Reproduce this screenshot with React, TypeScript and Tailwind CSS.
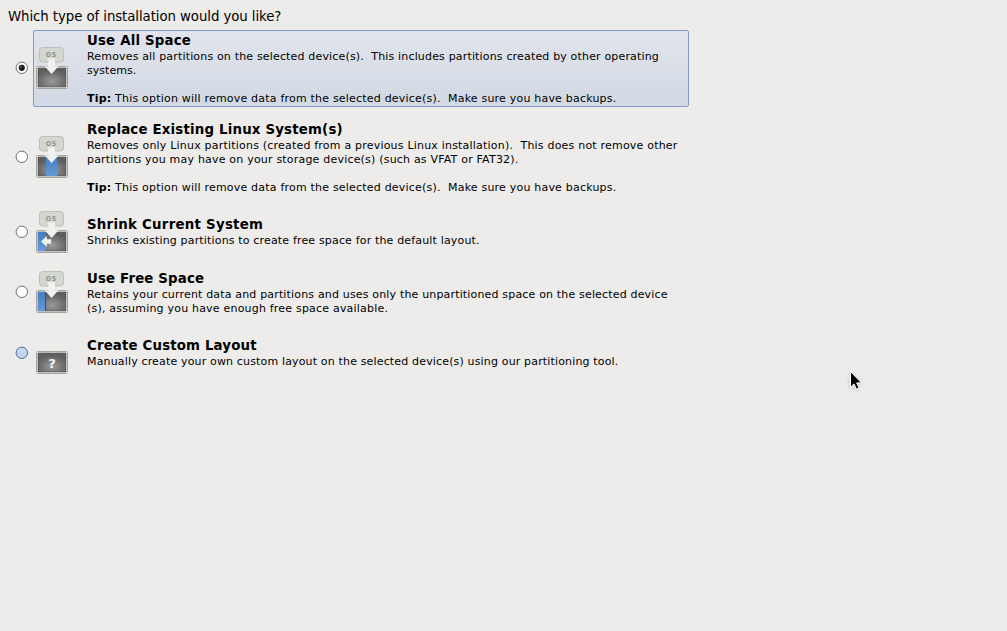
import { useState } from "react"
import clsx from "clsx"

type Kind = "all" | "replace" | "shrink" | "free" | "custom"

interface Line {
  text: string
  tracking: string
}

interface Option {
  kind: Kind
  title: Line
  lines: Line[]
  tip?: string
  box: string
  nudge?: string
}

const TIP = "This option will remove data from the selected device(s).  Make sure you have backups."

const options: Option[] = [
  {
    kind: "all",
    title: { text: "Use All Space", tracking: "tracking-[0.18px]" },
    lines: [
      {
        text: "Removes all partitions on the selected device(s).  This includes partitions created by other operating",
        tracking: "tracking-[0.167px]",
      },
      { text: "systems.", tracking: "tracking-[0.05px]" },
    ],
    tip: TIP,
    box: "h-[77px] pt-0.5",
    nudge: "mb-px",
  },
  {
    kind: "replace",
    title: { text: "Replace Existing Linux System(s)", tracking: "tracking-[0.19px]" },
    lines: [
      {
        text: "Removes only Linux partitions (created from a previous Linux installation).  This does not remove other",
        tracking: "tracking-[0.203px]",
      },
      {
        text: "partitions you may have on your storage device(s) (such as VFAT or FAT32).",
        tracking: "tracking-[0.2px]",
      },
    ],
    tip: TIP,
    box: "h-[77px] pt-0.5",
    nudge: "mb-px",
  },
  {
    kind: "shrink",
    title: { text: "Shrink Current System", tracking: "tracking-[0.26px]" },
    lines: [
      {
        text: "Shrinks existing partitions to create free space for the default layout.",
        tracking: "tracking-[0.165px]",
      },
    ],
    box: "h-12 pt-2",
  },
  {
    kind: "free",
    title: { text: "Use Free Space", tracking: "tracking-[0.15px]" },
    lines: [
      {
        text: "Retains your current data and partitions and uses only the unpartitioned space on the selected device",
        tracking: "tracking-[0.168px]",
      },
      { text: "(s), assuming you have enough free space available.", tracking: "tracking-[0.2px]" },
    ],
    box: "h-12 pt-0.5",
  },
  {
    kind: "custom",
    title: { text: "Create Custom Layout", tracking: "tracking-[0.16px]" },
    lines: [
      {
        text: "Manually create your own custom layout on the selected device(s) using our partitioning tool.",
        tracking: "tracking-[0.158px]",
      },
    ],
    box: "h-[50px] pt-[9px]",
  },
]

function DiskIcon({ kind }: { kind: Kind }) {
  return (
    <svg width="34" height="44" viewBox="0 0 34 44" className="block">
      <defs>
        <radialGradient id={`disk-${kind}`} cx="0.5" cy="0.7" r="0.6">
          <stop offset="0" stopColor="#999" />
          <stop offset="1" stopColor="#5e5e5e" />
        </radialGradient>
        <linearGradient id={`blue-${kind}`} x1="0" y1="0" x2="0" y2="1">
          <stop offset="0" stopColor="#447fc4" />
          <stop offset="1" stopColor="#6499d6" />
        </linearGradient>
      </defs>
      {kind !== "custom" && (
        <>
          <rect x="4.5" y="1.5" width="24" height="14.5" rx="3" fill="#d3d7cf" stroke="#bcc0b8" />
          <text
            x="10.8 16.7"
            y="11.3"
            fontSize="6.8"
            fontWeight="bold"
            fill="#8f938c"
            fontFamily="DejaVu Sans Condensed, DejaVu Sans, sans-serif"
          >
            OS
          </text>
        </>
      )}
      <rect x="1.5" y="20.5" width="31" height="22" rx="1" fill="#eeeeec" stroke="#a4a7a1" />
      <rect x="3" y="22" width="28" height="19" fill={`url(#disk-${kind})`} stroke="#555753" strokeWidth="0.6" />
      {kind === "replace" && <rect x="11" y="22" width="11" height="19" fill={`url(#blue-${kind})`} />}
      {kind === "shrink" && <rect x="3" y="22" width="8" height="19" fill={`url(#blue-${kind})`} />}
      {kind === "free" && (
        <>
          <rect x="3" y="22" width="7" height="19" fill={`url(#blue-${kind})`} />
          <path d="M10.5 22v19" stroke="#4a4a4a" />
        </>
      )}
      {kind === "custom" ? (
        <text
          x="17"
          y="36.8"
          textAnchor="middle"
          fontSize="13"
          fontWeight="bold"
          fill="#f5f5f5"
          fontFamily="DejaVu Sans, sans-serif"
        >
          ?
        </text>
      ) : (
        <path d="M13.2 12.3h6.8v7.9h3.6L16.6 28 9.6 20.2h3.6z" fill="#f1f1f0" />
      )}
      {kind === "shrink" && <path d="M6 31.5l5.8-5.6v3.4h4.4v4.4h-4.4v3.4z" fill="#f1f1f0" />}
    </svg>
  )
}

function Radio({ checked, hover }: { checked: boolean; hover: boolean }) {
  return (
    <svg width="14" height="14" viewBox="0 0 14 14" className="block">
      <circle cx="6.8" cy="6.8" r="5.7" fill={hover ? "#c5d7ef" : "#fff"} stroke={hover ? "#4a6c9b" : "#70706e"} />
      {checked && (
        <>
          <circle cx="6.8" cy="6.8" r="3.1" fill="#1a1a1a" />
          <circle cx="5.8" cy="5.8" r="0.9" fill="#777" />
        </>
      )}
    </svg>
  )
}

function Pointer() {
  return (
    <svg width="14" height="22" viewBox="0 0 14 22" className="absolute left-[849px] top-[370px] drop-shadow-sm">
      <path
        d="M1.5 1.5v15.8l3.5-3.4 2.5 5.3 2.6-1.2-2.4-5.1h4.8z"
        fill="#000"
        stroke="#fff"
        strokeWidth="1"
        strokeLinejoin="round"
      />
    </svg>
  )
}

export default function App() {
  const [selected, setSelected] = useState<Kind>("all")

  return (
    <main className="relative h-[631px] w-[1007px] overflow-hidden bg-[#edecea] font-['DejaVu_Sans',sans-serif] text-black">
      <h1 className="h-[30px] pl-2 pt-[9px] text-[13.33px] leading-4 tracking-[-0.083px]">
        Which type of installation would you like?
      </h1>
      <div className="flex flex-col gap-3">
        {options.map(({ kind, title, lines, tip, box, nudge }) => (
          <div key={kind} className="flex items-center pl-[15px]">
            <button className={clsx("mr-1", nudge)} onClick={() => setSelected(kind)}>
              <Radio checked={selected === kind} hover={kind === "custom"} />
            </button>
            <div
              onClick={() => setSelected(kind)}
              className={clsx(
                "flex w-[656px] rounded-[2px] border pl-px",
                box,
                selected === kind
                  ? "border-[#7f9dc3] bg-linear-to-b from-[#e1e4eb] to-[#d2d9e4]"
                  : "border-transparent",
              )}
            >
              <div
                className={clsx(
                  "shrink-0",
                  tip && "mt-[13px]",
                  kind === "shrink" && "-mt-[7px]",
                  kind === "free" && "-mt-px",
                  kind === "custom" && "-mt-[7px]",
                )}
              >
                <DiskIcon kind={kind} />
              </div>
              <div className="ml-[18px] whitespace-pre text-[11px] leading-[14px]">
                <h2 className={clsx("mb-0.5 text-[13.33px] font-bold leading-[15px]", title.tracking)}>{title.text}</h2>
                {lines.map((line) => (
                  <p key={line.text} className={line.tracking}>
                    {line.text}
                  </p>
                ))}
                {tip && (
                  <p className="mt-[14px] tracking-[0.203px]">
                    <b>Tip:</b> {tip}
                  </p>
                )}
              </div>
            </div>
          </div>
        ))}
      </div>
      <Pointer />
    </main>
  )
}
